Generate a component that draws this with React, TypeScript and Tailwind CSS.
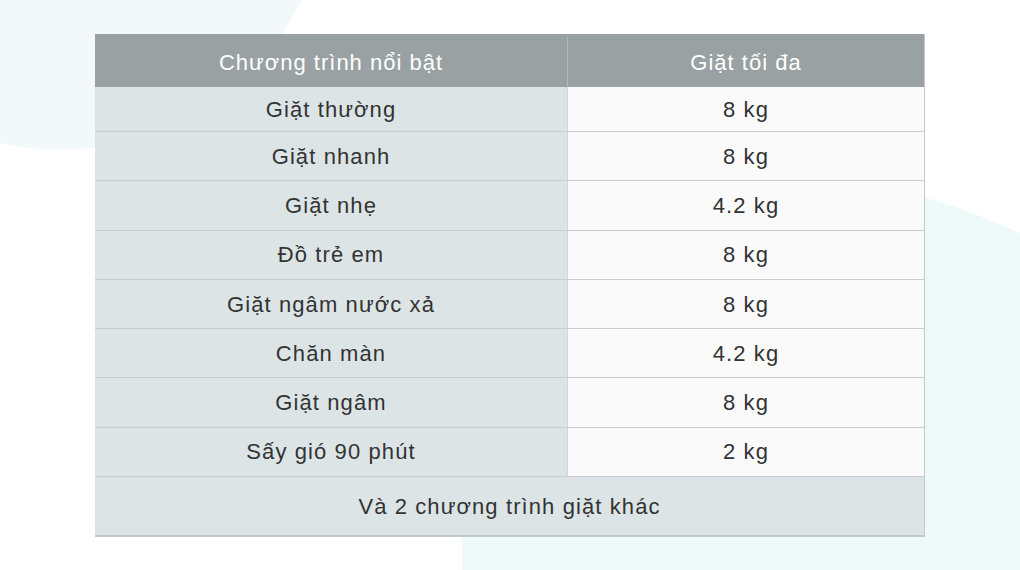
const rows = [
  ["Giặt thường", "8 kg"],
  ["Giặt nhanh", "8 kg"],
  ["Giặt nhẹ", "4.2 kg"],
  ["Đồ trẻ em", "8 kg"],
  ["Giặt ngâm nước xả", "8 kg"],
  ["Chăn màn", "4.2 kg"],
  ["Giặt ngâm", "8 kg"],
  ["Sấy gió 90 phút", "2 kg"],
]

export default function App() {
  return (
    <div
      className="relative h-[570px] w-[1020px] overflow-hidden bg-white text-[#333]"
      style={{ fontFamily: '"Liberation Sans", Arial, sans-serif' }}
    >
      {/* background blobs */}
      <div className="absolute left-[-210px] top-[-390px] h-[540px] w-[540px] rounded-full bg-[#f3f9fb]" />
      <div className="absolute left-[462px] top-[175px] h-[900px] w-[900px] rounded-tr-[600px] rounded-tl-[200px] bg-[#eef9fa]" />

      <div className="relative z-10 pl-[95px] pt-[34px]">
        <div className="w-[830px] border-r border-b-2 border-[#c3c9cb] text-[22px] tracking-[1.1px]">
          <div className="flex h-[53px] bg-[#99a1a3] pt-[3px] tracking-[1px] text-white">
            <div className="flex w-[473px] items-center justify-center border-r border-[#b4babc]">
              Chương trình nổi bật
            </div>
            <div className="flex flex-1 items-center justify-center">Giặt tối đa</div>
          </div>
          {rows.map(([name, kg], i) => (
            <div
              key={name}
              className={"flex border-b border-[#c6cccf] " + (i === 0 ? "h-[45px]" : "h-[49.3px]")}
            >
              <div className="flex w-[473px] items-center justify-center border-r border-[#d2d8da] bg-[#dce4e6]">
                {name}
              </div>
              <div className="flex flex-1 items-center justify-center bg-[#fafafa]">{kg}</div>
            </div>
          ))}
          <div className="flex h-[58px] items-center justify-center bg-[#dce4e6]">
            Và 2 chương trình giặt khác
          </div>
        </div>
      </div>
    </div>
  )
}
